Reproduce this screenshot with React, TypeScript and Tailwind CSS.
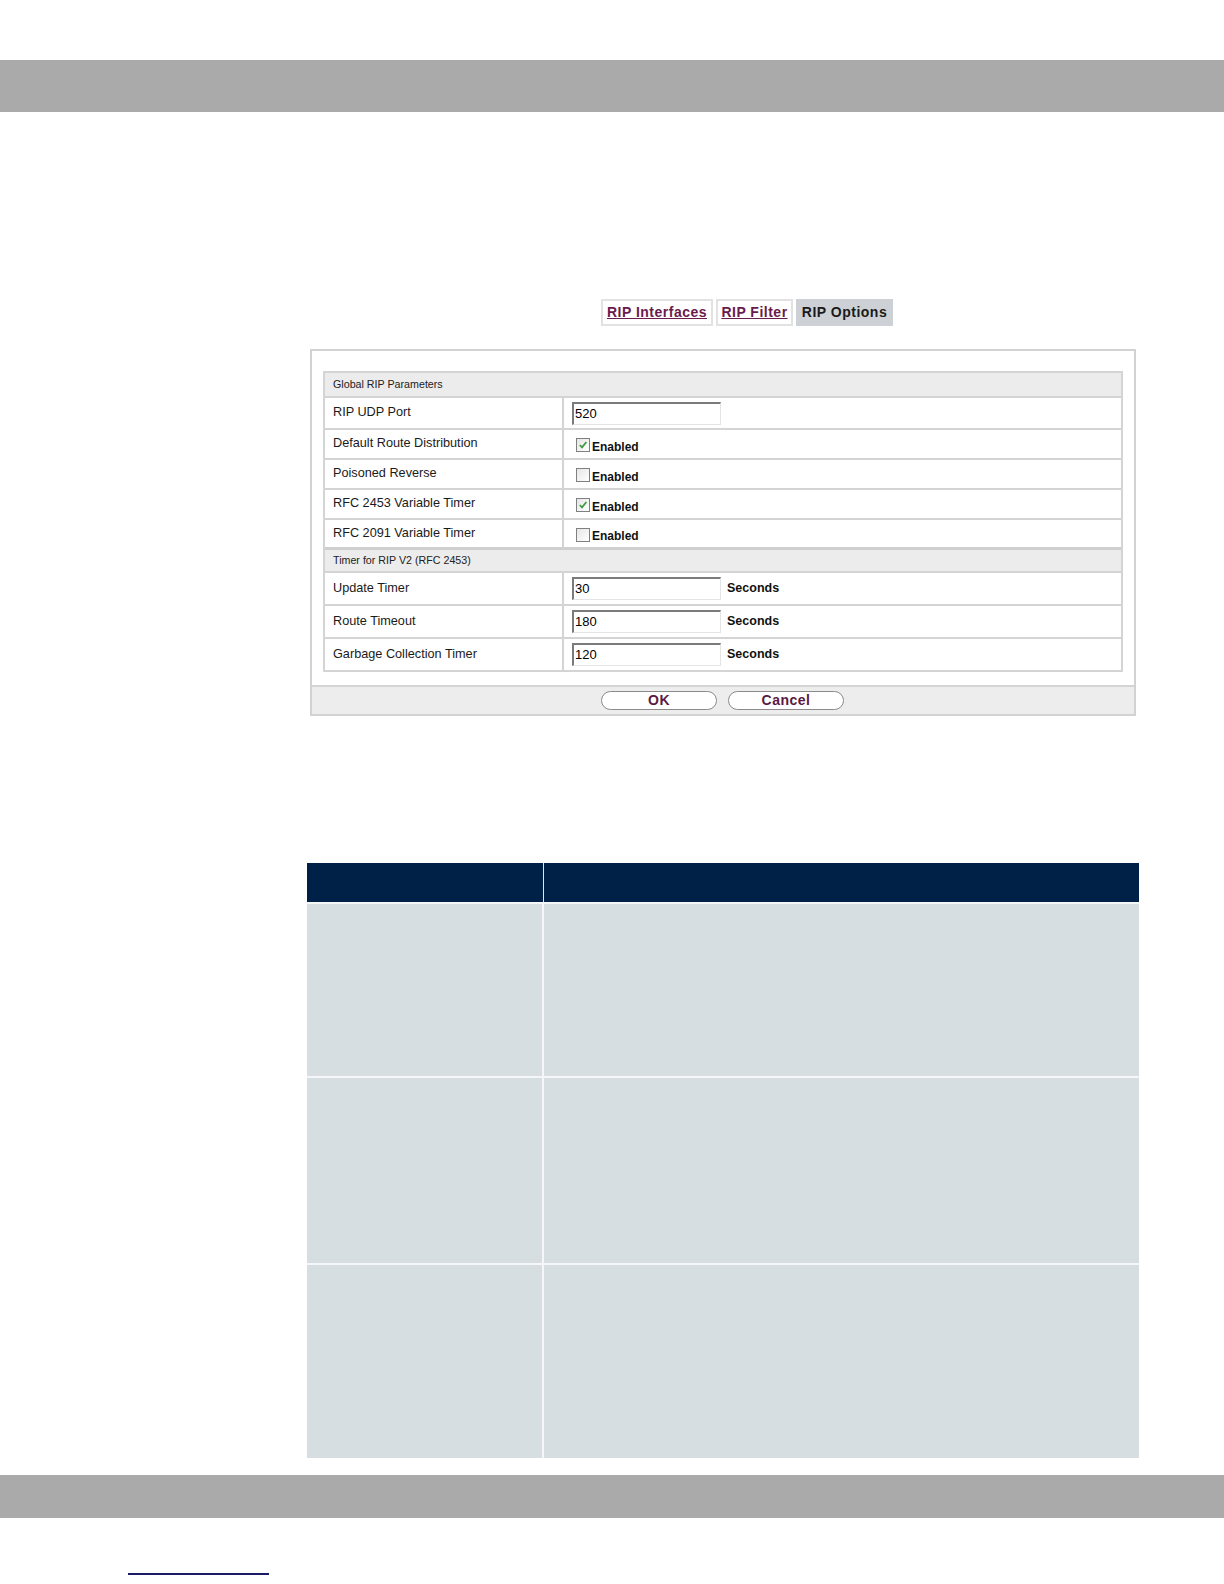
import React from 'react';

const font = { fontFamily: '"Liberation Sans", Arial, sans-serif' };

function Check({ on }: { on: boolean }) {
  return (
    <span className="inline-flex w-[14px] h-[14px] border border-[#808080] bg-gradient-to-br from-[#e6e6e6] to-white items-center justify-center mr-[2px]">
      {on && (
        <svg width="10" height="10" viewBox="0 0 10 10">
          <path d="M1.8 5 L4 7.4 L8.4 2" fill="none" stroke="#3d9a3d" strokeWidth="1.7" />
        </svg>
      )}
    </span>
  );
}

function Field({ value, unit }: { value: string; unit?: boolean }) {
  return (
    <div className="flex items-center">
      <div className="w-[149px] h-[23px] bg-white border-t-2 border-l-2 border-t-[#7b7b7b] border-l-[#7b7b7b] border-b border-r border-b-[#e4e4e4] border-r-[#e4e4e4] pl-[1px] text-[13px] leading-[20px] text-black">
        {value}
      </div>
      {unit && <span className="ml-[6px] text-[12.5px] font-bold text-[#111]">Seconds</span>}
    </div>
  );
}

function Row({ label, children, h }: { label: string; children: React.ReactNode; h: string }) {
  return (
    <div className={`flex border-t-2 border-[#d4d4d4] ${h}`}>
      <div className="w-[239px] border-r-2 border-[#d4d4d4] flex items-center pl-[8px] text-[12.7px] text-[#1a1a1a]">
        {label}
      </div>
      <div className="flex-1 flex items-center pl-[8px]">{children}</div>
    </div>
  );
}

function Enabled({ on }: { on: boolean }) {
  return (
    <div className="flex items-center pt-[2px] ml-[4px]">
      <Check on={on} />
      <span className="text-[12px] font-bold text-[#111] leading-none pt-[3px]">Enabled</span>
    </div>
  );
}

function Section({ title, thick }: { title: string; thick?: boolean }) {
  return (
    <div className={`bg-[#ececec] ${thick ? 'border-t-[3px] border-[#cfcfcf] h-[24px]' : 'h-[23px]'} flex items-center pl-[8px] text-[10.7px] text-[#222]`}>
      {title}
    </div>
  );
}

const tabLink = 'h-[27px] border-2 border-[#e2e2e2] flex items-center justify-center text-[14px] font-bold underline text-[#6a1b4d] tracking-[0.5px]';

export default function App() {
  return (
    <div className="w-[1224px] h-[1584px] bg-white" style={font}>
      <div className="h-[60px]" />
      <div className="h-[52px] bg-[#aaaaaa]" />

      <div className="flex gap-[3px] ml-[601px] mt-[187px]">
        <div className={`${tabLink} w-[112px]`}>RIP Interfaces</div>
        <div className={`${tabLink} w-[77px]`}>RIP Filter</div>
        <div className="h-[27px] w-[97px] bg-[#cdd1d6] flex items-center justify-center text-[14px] font-bold text-[#1a1a1a] tracking-[0.5px]">
          RIP Options
        </div>
      </div>

      <div className="ml-[310px] mt-[23px] w-[826px] border-2 border-[#d2d2d2] bg-white">
        <div className="pl-[11px] pr-[11px] pt-[20px] pb-[13px]">
          <div className="border-2 border-[#d4d4d4]">
            <Section title="Global RIP Parameters" />
            <Row label="RIP UDP Port" h="h-[32px]">
              <Field value="520" />
            </Row>
            <Row label="Default Route Distribution" h="h-[30px]">
              <Enabled on />
            </Row>
            <Row label="Poisoned Reverse" h="h-[30px]">
              <Enabled on={false} />
            </Row>
            <Row label="RFC 2453 Variable Timer" h="h-[30px]">
              <Enabled on />
            </Row>
            <Row label="RFC 2091 Variable Timer" h="h-[29px]">
              <Enabled on={false} />
            </Row>
            <Section title="Timer for RIP V2 (RFC 2453)" thick />
            <Row label="Update Timer" h="h-[33px]">
              <Field value="30" unit />
            </Row>
            <Row label="Route Timeout" h="h-[33px]">
              <Field value="180" unit />
            </Row>
            <Row label="Garbage Collection Timer" h="h-[33px]">
              <Field value="120" unit />
            </Row>
          </div>
        </div>
        <div className="h-[29px] bg-[#ededed] border-t-2 border-[#d4d4d4] flex items-center pl-[289px] gap-[11px]">
          <div className="w-[116px] h-[19px] rounded-full border border-[#8a8a8a] bg-white flex items-center justify-center text-[14px] font-bold text-[#5a1a44] tracking-[0.5px]">
            OK
          </div>
          <div className="w-[116px] h-[19px] rounded-full border border-[#8a8a8a] bg-white flex items-center justify-center text-[14px] font-bold text-[#5a1a44] tracking-[0.5px]">
            Cancel
          </div>
        </div>
      </div>

      <div className="ml-[307px] mt-[147px] w-[832px] flex flex-col">
        <div className="flex h-[39px] bg-[#002147]">
          <div className="w-[237px] border-r border-[#dfe6ea]" />
          <div className="flex-1" />
        </div>
        {['h-[174px]', 'h-[187px]', 'h-[195px]'].map((h, i) => (
          <div key={i} className={`flex ${h} bg-[#d7dee2] border-t-2 border-[#f4f6f7]`}>
            <div className="w-[237px] border-r-2 border-[#f4f6f7]" />
            <div className="flex-1" />
          </div>
        ))}
      </div>

      <div className="mt-[17px] h-[43px] bg-[#aaaaaa]" />
      <div className="ml-[128px] mt-[55px] w-[141px] h-[2px] bg-[#1a1a6a]" />
    </div>
  );
}
